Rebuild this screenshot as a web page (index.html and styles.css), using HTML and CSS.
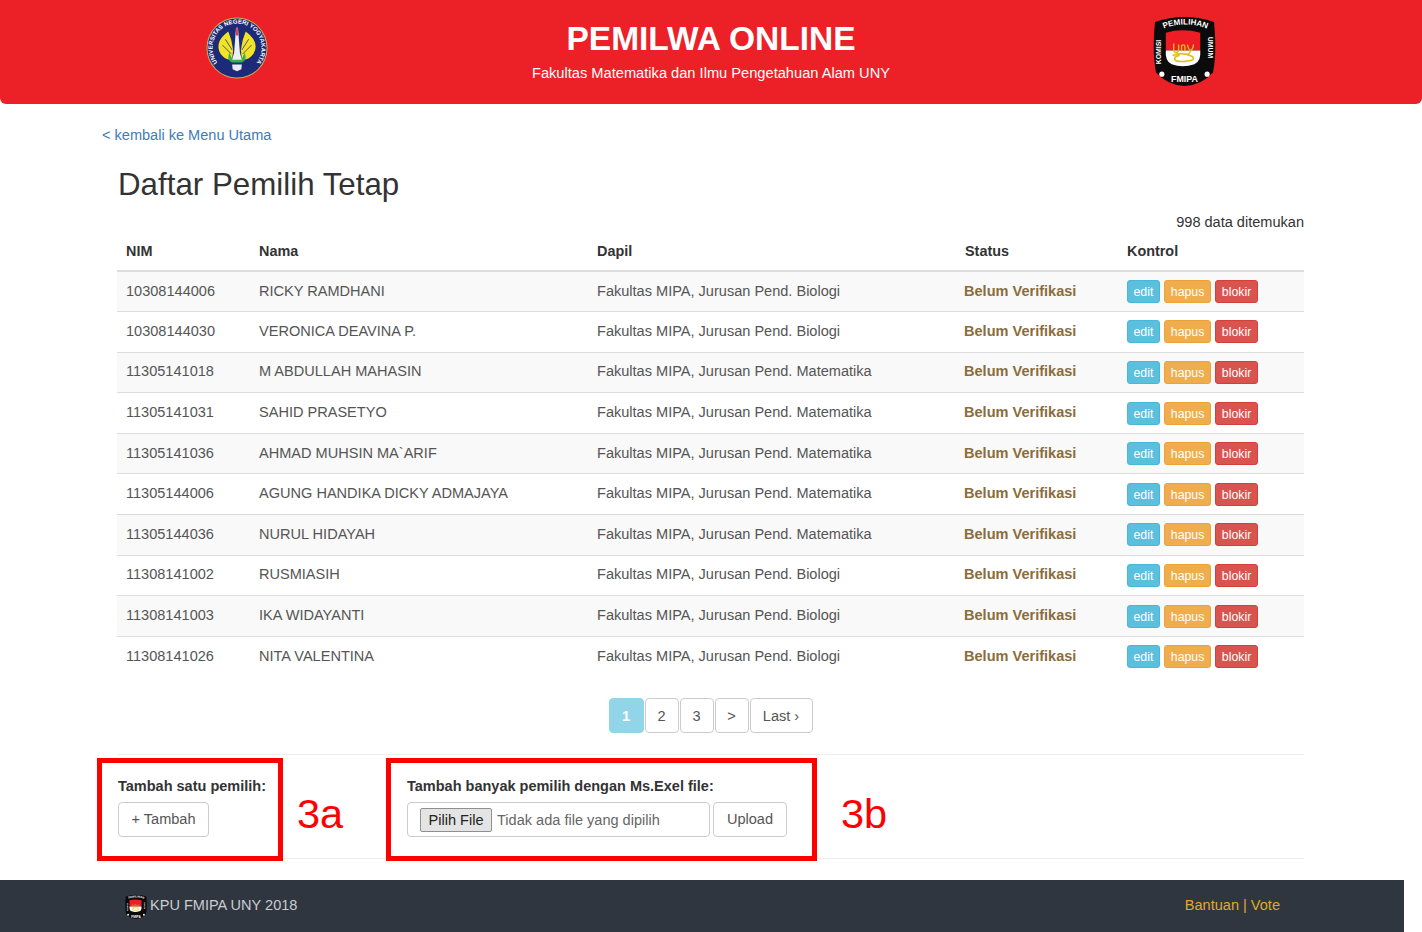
FILE: index.html
```html
<!DOCTYPE html>
<html lang="id">
<head>
<meta charset="utf-8">
<title>Pemilwa Online</title>
<link rel="stylesheet" href="styles.css">
</head>
<body>
<svg class="defs" width="0" height="0" aria-hidden="true">
  <defs>
    <symbol id="kpu" viewBox="0 0 64 72">
      <path d="M2 7 Q32 -3 62 7 Q65 38 61 58 Q50 71 32 72 Q14 71 3 58 Q-1 38 2 7Z" fill="#0b0b0b"/>
      <path id="kpuTop" d="M8 15 Q32 4 58 15" fill="none"/>
      <text class="kpu-text" font-size="8.2" fill="#fff"><textPath href="#kpuTop" startOffset="50%" text-anchor="middle">PEMILIHAN</textPath></text>
      <text class="kpu-text" font-size="7" fill="#fff" transform="translate(8.5 50) rotate(-90)">KOMISI</text>
      <text class="kpu-text" font-size="7" fill="#fff" transform="translate(56 22) rotate(90)">UMUM</text>
      <text class="kpu-text" font-size="9" fill="#fff" x="32" y="68" text-anchor="middle">FMIPA</text>
      <circle cx="9" cy="60" r="2.6" fill="#fff"/>
      <circle cx="55" cy="60" r="2.6" fill="#fff"/>
      <path d="M13 18 Q30 13 48 18 L48 36 L13 36Z" fill="#ee1c25"/>
      <path d="M13 36 L48 36 Q49 47 42 50 Q30 54 19 50 Q12 47 13 36Z" fill="#fff"/>
      <path d="M21 29 v6 q0 3 2.5 3 t2.5 -3 v-5 M29 37 v-6 q3.5 -2 3.5 2 v4 M35 30 q1 5 3 6 q3 -1 3 -6 M38 36 q0 3 -3 4" fill="none" stroke="#e2bd1c" stroke-width="1.4"/>
      <path d="M20 41 q10 -4 20 1 q4 4 -7 5 q-11 1 -11 -3 q0 -2 5 -3" fill="none" stroke="#e2bd1c" stroke-width="1.7"/>
    </symbol>
  </defs>
</svg>

<header class="site-header">
  <svg class="logo logo-uny" viewBox="0 0 64 64" role="img" aria-label="Logo UNY">
    <defs><path id="unyRing" d="M19 53.5 A25.2 25.2 0 1 1 45 53.5"/></defs>
    <circle cx="32" cy="32" r="31.5" fill="#c9b25b"/>
    <circle cx="32" cy="32" r="30.5" fill="#1d2a78"/>
    <text class="uny-text" font-size="6.2" fill="#fff"><textPath href="#unyRing" startOffset="50%" text-anchor="middle">UNIVERSITAS NEGERI YOGYAKARTA</textPath></text>
    <path d="M23 15 Q8 26 15 38 Q20 45 27 44 L28 34 Q27 24 23 15Z" fill="#f3e327"/>
    <path d="M41 15 Q56 26 49 38 Q44 45 37 44 L36 34 Q37 24 41 15Z" fill="#f3e327"/>
    <path d="M17 29 L26 38 M20 23 L27 34 M47 29 L38 38 M44 23 L37 34" stroke="#1d2a78" stroke-width=".8"/>
    <path d="M24 37 Q21 45 27 47 L37 47 Q43 45 40 37 L37 43 L27 43Z" fill="#35b34a"/>
    <path d="M31 11 L33 11 L35 37 L37 44 L27 44 L29 37Z" fill="#eceff4"/>
    <path d="M31.2 11 L32.8 11 L33 19 L31 19Z" fill="#d8333a"/>
    <path d="M27 49 L37 49 L36.5 54 L32 56 L27.5 54Z" fill="#e8ecf3"/>
  </svg>
  <div class="brand">
    <h1 class="brand-title">PEMILWA ONLINE</h1>
    <p class="brand-sub">Fakultas Matematika dan Ilmu Pengetahuan Alam UNY</p>
  </div>
  <svg class="logo logo-kpu" role="img" aria-label="Logo KPU FMIPA"><use href="#kpu"/></svg>
</header>

<main class="page">
  <a class="back" href="#">&lt; kembali ke Menu Utama</a>
  <h2 class="title">Daftar Pemilih Tetap</h2>
  <p class="count">998 data ditemukan</p>

  <table class="voters">
    <colgroup>
      <col class="c-nim"><col class="c-nama"><col class="c-dapil"><col class="c-status"><col class="c-ctl">
    </colgroup>
    <thead>
      <tr><th>NIM</th><th>Nama</th><th>Dapil</th><th>Status</th><th>Kontrol</th></tr>
    </thead>
    <tbody>
      <tr><td>10308144006</td><td>RICKY RAMDHANI</td><td>Fakultas MIPA, Jurusan Pend. Biologi</td><td class="status">Belum Verifikasi</td><td class="ctl"><a class="b b-edit">edit</a><a class="b b-del">hapus</a><a class="b b-block">blokir</a></td></tr>
      <tr><td>10308144030</td><td>VERONICA DEAVINA P.</td><td>Fakultas MIPA, Jurusan Pend. Biologi</td><td class="status">Belum Verifikasi</td><td class="ctl"><a class="b b-edit">edit</a><a class="b b-del">hapus</a><a class="b b-block">blokir</a></td></tr>
      <tr><td>11305141018</td><td>M ABDULLAH MAHASIN</td><td>Fakultas MIPA, Jurusan Pend. Matematika</td><td class="status">Belum Verifikasi</td><td class="ctl"><a class="b b-edit">edit</a><a class="b b-del">hapus</a><a class="b b-block">blokir</a></td></tr>
      <tr><td>11305141031</td><td>SAHID PRASETYO</td><td>Fakultas MIPA, Jurusan Pend. Matematika</td><td class="status">Belum Verifikasi</td><td class="ctl"><a class="b b-edit">edit</a><a class="b b-del">hapus</a><a class="b b-block">blokir</a></td></tr>
      <tr><td>11305141036</td><td>AHMAD MUHSIN MA`ARIF</td><td>Fakultas MIPA, Jurusan Pend. Matematika</td><td class="status">Belum Verifikasi</td><td class="ctl"><a class="b b-edit">edit</a><a class="b b-del">hapus</a><a class="b b-block">blokir</a></td></tr>
      <tr><td>11305144006</td><td>AGUNG HANDIKA DICKY ADMAJAYA</td><td>Fakultas MIPA, Jurusan Pend. Matematika</td><td class="status">Belum Verifikasi</td><td class="ctl"><a class="b b-edit">edit</a><a class="b b-del">hapus</a><a class="b b-block">blokir</a></td></tr>
      <tr><td>11305144036</td><td>NURUL HIDAYAH</td><td>Fakultas MIPA, Jurusan Pend. Matematika</td><td class="status">Belum Verifikasi</td><td class="ctl"><a class="b b-edit">edit</a><a class="b b-del">hapus</a><a class="b b-block">blokir</a></td></tr>
      <tr><td>11308141002</td><td>RUSMIASIH</td><td>Fakultas MIPA, Jurusan Pend. Biologi</td><td class="status">Belum Verifikasi</td><td class="ctl"><a class="b b-edit">edit</a><a class="b b-del">hapus</a><a class="b b-block">blokir</a></td></tr>
      <tr><td>11308141003</td><td>IKA WIDAYANTI</td><td>Fakultas MIPA, Jurusan Pend. Biologi</td><td class="status">Belum Verifikasi</td><td class="ctl"><a class="b b-edit">edit</a><a class="b b-del">hapus</a><a class="b b-block">blokir</a></td></tr>
      <tr><td>11308141026</td><td>NITA VALENTINA</td><td>Fakultas MIPA, Jurusan Pend. Biologi</td><td class="status">Belum Verifikasi</td><td class="ctl"><a class="b b-edit">edit</a><a class="b b-del">hapus</a><a class="b b-block">blokir</a></td></tr>
    </tbody>
  </table>

  <nav class="pager">
    <a class="pg pg-on">1</a><a class="pg">2</a><a class="pg">3</a><a class="pg">&gt;</a><a class="pg pg-last">Last ›</a>
  </nav>

  <section class="actions">
    <div class="action action-one">
      <p class="action-label">Tambah satu pemilih:</p>
      <a class="btn">+ Tambah</a>
    </div>
    <div class="action action-many">
      <p class="action-label">Tambah banyak pemilih dengan Ms.Exel file:</p>
      <div class="upload">
        <div class="file"><span class="file-btn">Pilih File</span><span class="file-name">Tidak ada file yang dipilih</span></div>
        <a class="btn btn-upload">Upload</a>
      </div>
    </div>
    <div class="mark mark-a"></div>
    <div class="mark mark-b"></div>
    <span class="mark-text mark-text-a">3a</span>
    <span class="mark-text mark-text-b">3b</span>
  </section>
</main>

<footer class="site-footer">
  <div class="foot-left">
    <svg class="foot-logo" role="img" aria-label="Logo KPU"><use href="#kpu"/></svg>
    <span>KPU FMIPA UNY 2018</span>
  </div>
  <div class="foot-right">Bantuan | Vote</div>
</footer>
</body>
</html>
```

FILE: styles.css
```css
* { box-sizing: border-box; }
html, body { height: 100%; }
body {
  margin: 0;
  background: #fff;
  color: #333;
  font-family: "Liberation Sans", Arial, sans-serif;
  font-size: 14.55px;
  overflow: hidden;
}
.defs { position: absolute; }
.kpu-text { font-family: "Liberation Sans", Arial, sans-serif; font-weight: 700; }
.uny-text { font-family: "Liberation Sans", Arial, sans-serif; font-weight: 700; }

.site-header {
  height: 104px;
  background: #ec2027;
  border-radius: 0 0 6px 6px;
  display: grid;
  grid-template-columns: 1fr auto 1fr;
  align-items: start;
  color: #fff;
}
.logo { width: 62px; height: 62px; display: block; margin-top: 17px; }
.logo-uny { justify-self: start; margin-left: 206px; }
.logo-kpu { justify-self: end; width: 63px; height: 71px; margin-top: 15px; margin-right: 206px; }
.brand { text-align: center; padding-top: 20px; }
.brand-title { margin: 0; font-size: 33.5px; line-height: 38px; font-weight: 700; }
.brand-sub { margin: 6px 0 0; font-size: 14.65px; line-height: 18px; }

.page { width: 1187px; margin-left: 117px; position: relative; }
.back {
  display: block;
  margin: 23px 0 0 -15px;
  color: #3f7cb5;
  font-size: 14.55px;
  line-height: 17px;
  text-decoration: none;
}
.title {
  margin: 23px 0 0 1px;
  font-size: 31.3px;
  line-height: 36px;
  font-weight: 400;
  color: #333;
}
.count { margin: 9px 0 0; text-align: right; font-size: 14.55px; line-height: 20px; }

.voters { width: 100%; border-collapse: collapse; table-layout: fixed; font-size: 14.55px; color: #555; margin-top: 0; }
.c-nim { width: 133px; }
.c-nama { width: 338px; }
.c-dapil { width: 368px; }
.c-status { width: 162px; }
.c-ctl { width: 186px; }
.voters th {
  height: 39px;
  padding: 0 9px;
  text-align: left;
  font-weight: 700;
  font-size: 14.4px;
  color: #333;
  border-bottom: 2px solid #ddd;
}
.voters td { height: 40.6px; padding: 0 9px 2px; border-bottom: 1px solid #ddd; white-space: nowrap; }
.voters tbody tr:nth-child(odd) { background: #f9f9f9; }
.voters tbody tr:last-child td { border-bottom: 0; }
.voters td.status { color: #8a6d3b; font-weight: 700; padding-left: 8px; }
.voters td.ctl { padding: 0 0 0 9px; }
.ctl { font-size: 0; }
.b {
  display: inline-block;
  height: 23px;
  line-height: 22px;
  padding: 0 5.5px;
  margin-right: 4px;
  border-radius: 3px;
  color: #fff;
  font-size: 12.3px;
  border: 1px solid transparent;
}
.b-edit { background: #5bc0de; border-color: #46b8da; }
.b-del { background: #f0ad4e; border-color: #eea236; padding: 0 6px; }
.b-block { background: #d9534f; border-color: #d43f3a; }

.pager { display: flex; justify-content: center; gap: 1px; margin-top: 21px; }
.pg {
  width: 34px;
  height: 35px;
  line-height: 34px;
  text-align: center;
  border: 1px solid #ccc;
  border-radius: 4px;
  background: #fff;
  color: #555;
  font-size: 14.55px;
}
.pg-on { width: 35px; background: #92d5e8; border-color: #92d5e8; color: #fff; font-weight: 700; }
.pg-last { width: 63px; }

.actions {
  position: relative;
  display: flex;
  margin-top: 21px;
  height: 105px;
  border-top: 1px solid #eee;
  border-bottom: 1px solid #eee;
  padding: 23px 0 0 1px;
}
.action-one { width: 289px; }
.action-label { margin: 0 0 7px; font-size: 14.5px; line-height: 17px; font-weight: 700; }
.btn {
  display: inline-block;
  height: 35px;
  line-height: 33px;
  padding: 0 12.5px;
  border: 1px solid #ccc;
  border-radius: 4px;
  background: #fff;
  color: #555;
  font-size: 14.55px;
}
.upload { display: flex; gap: 3px; }
.file {
  width: 303px;
  height: 35px;
  display: flex;
  align-items: center;
  padding: 1px 0 0 12px;
  border: 1px solid #ccc;
  border-radius: 4px;
  color: #555;
}
.file-btn {
  width: 72px;
  height: 24px;
  line-height: 22px;
  text-align: center;
  background: #e4e4e4;
  border: 1px solid #8f8f8f;
  border-radius: 2px;
  color: #222;
  flex: none;
}
.file-name { margin-left: 5px; white-space: nowrap; color: #666; }
.btn-upload { width: 74px; padding: 0; text-align: center; }

.mark { position: absolute; border: 5px solid #fe0000; top: 3px; height: 103px; }
.mark-a { left: -20px; width: 186px; }
.mark-b { left: 269px; width: 431px; }
.mark-text { position: absolute; top: 35px; color: #fe0000; font-size: 41.5px; line-height: 48px; }
.mark-text-a { left: 180px; }
.mark-text-b { left: 724px; }

.site-footer {
  position: absolute;
  left: 0;
  bottom: 0;
  width: 1404px;
  height: 52px;
  background: #2f3640;
  display: flex;
  align-items: center;
  justify-content: space-between;
  padding: 0 124px 2px 125px;
  font-size: 14.55px;
}
.foot-left { display: flex; align-items: center; gap: 3px; color: #c9ccd0; }
.foot-logo { width: 22px; height: 25px; display: block; margin-top: 3px; }
.foot-right { color: #e0a92c; }
```
